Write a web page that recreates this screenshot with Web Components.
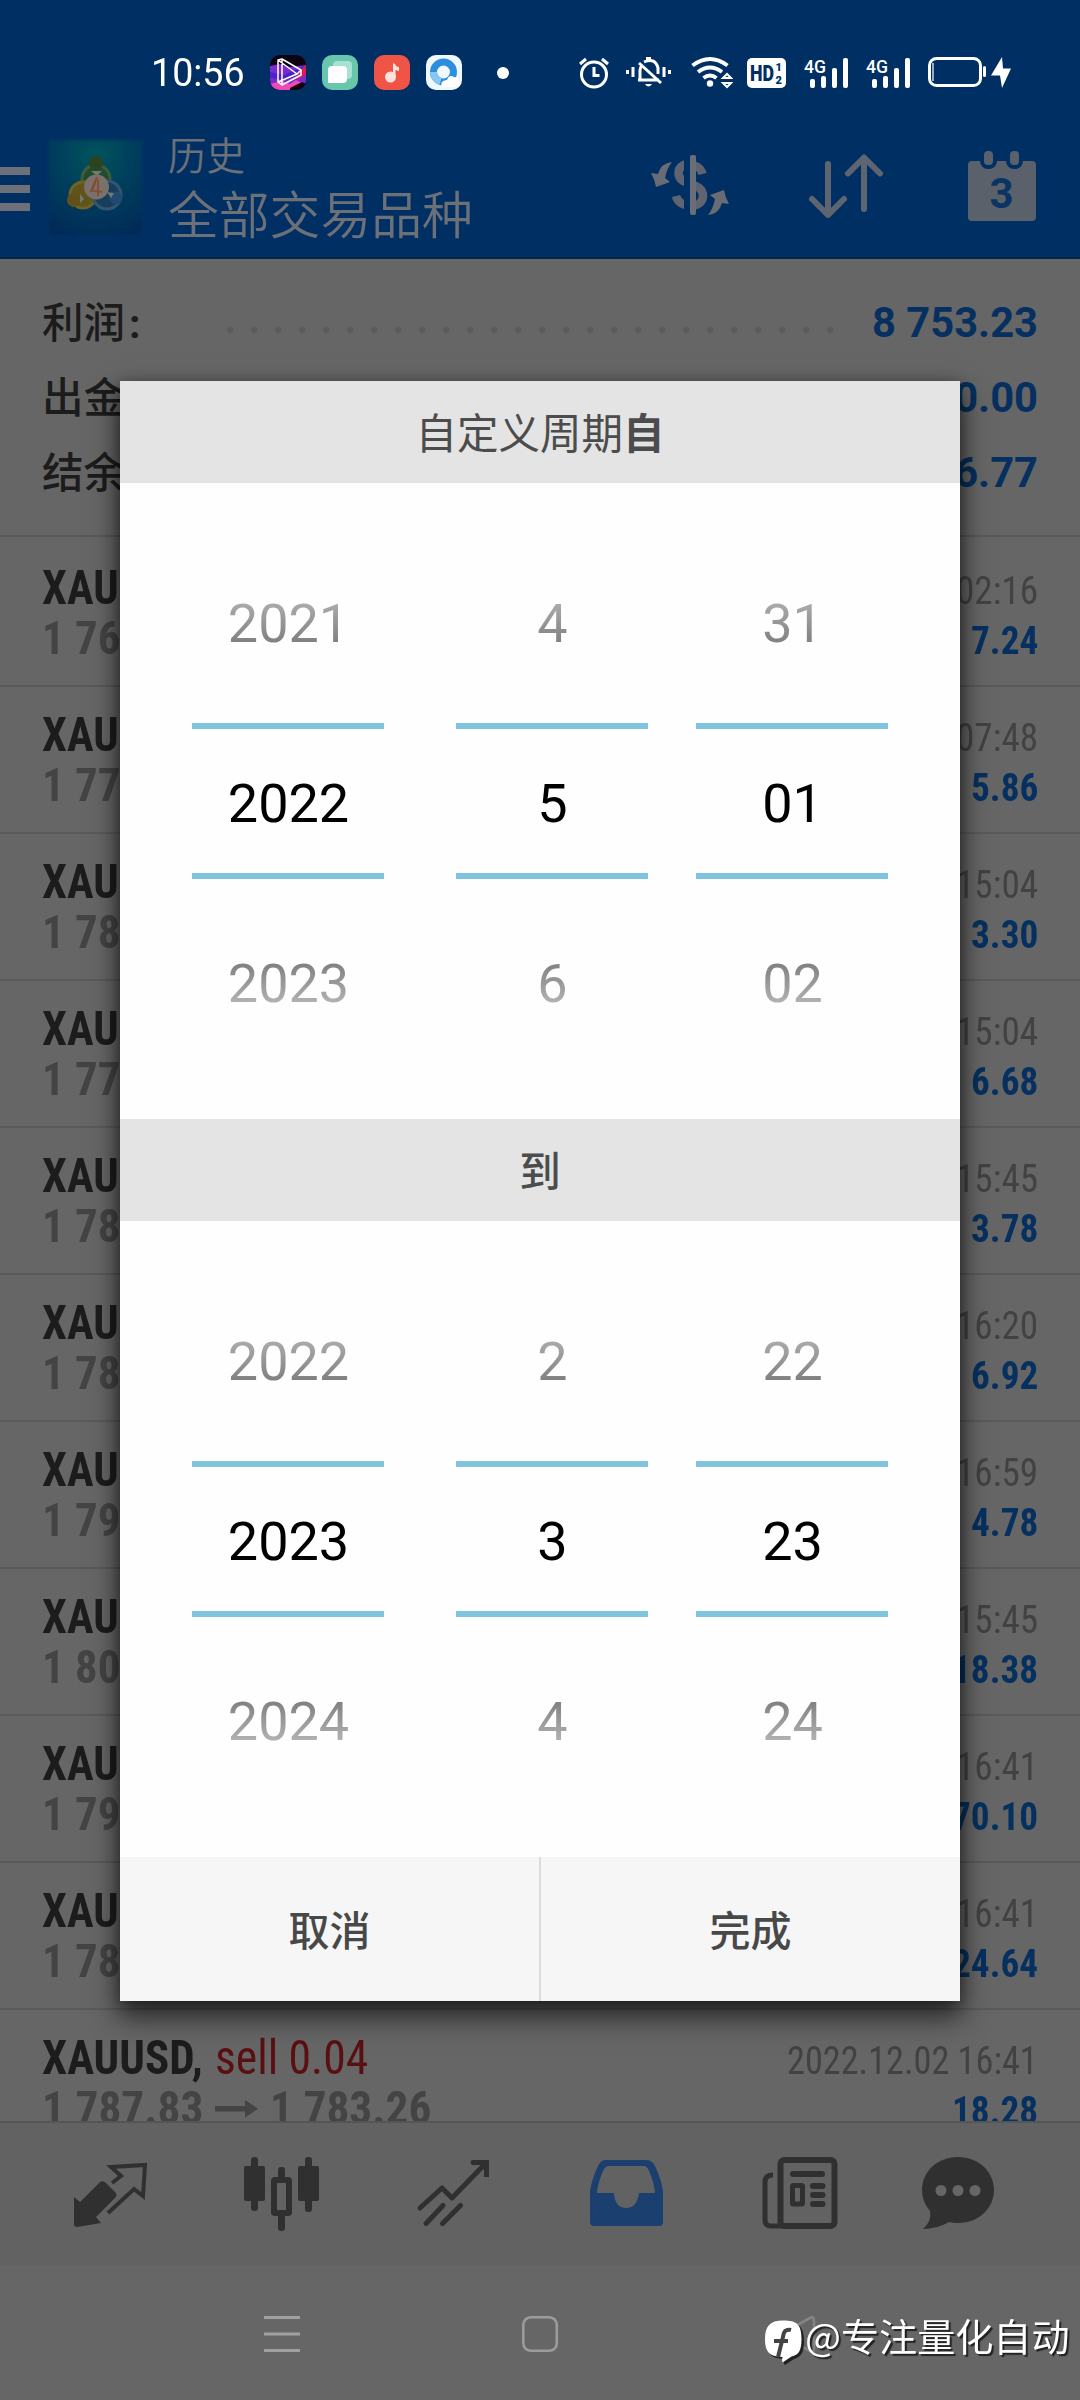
<!DOCTYPE html>
<html lang="zh-CN">
<head>
<meta charset="utf-8">
<title>历史</title>
<style>
html,body{margin:0;padding:0}
body{width:1080px;height:2400px;overflow:hidden;background:#666;font-family:Roboto,"Noto Sans CJK SC",sans-serif}
</style>
</head>
<body>
<history-screen></history-screen>
<script>
const make = (name, html, setup) => customElements.define(name, class extends HTMLElement {
  connectedCallback() {
    if (this.shadowRoot) return;
    const root = this.attachShadow({ mode: 'open' });
    root.innerHTML = typeof html === 'function' ? html(this) : html;
    if (setup) setup(this, root);
  }
});

/* Icons: [viewBox, content] */
const signal = x => `<text x="${x}" y="72" font-size="19" textLength="22" lengthAdjust="spacingAndGlyphs" font-family="Roboto" font-weight="500" fill="#fff">4G</text>
<rect x="${x+6}" y="78" width="5" height="9" rx="2"/><rect x="${x+17}" y="75" width="5" height="12" rx="2"/><rect x="${x+28}" y="67" width="5" height="20" rx="2"/><rect x="${x+39}" y="57" width="5" height="30" rx="2"/>`;
const ICONS = {
  appVideo: ['270 55 36 35', `<defs><clipPath id="r"><rect x="270" y="55" width="36" height="35" rx="10"/></clipPath></defs><g clip-path="url(#r)"><rect x="270" y="55" width="36" height="35" fill="#0b0310"/><path d="M270 66l10-2 10 3 16-2v18l-14 7h-22z" fill="#7a2bd0"/><path d="M270 72l14 3 22-10v7l-20 8-16-2z" fill="#4a22c8"/><path d="M298 72l8-7v10l-9 5z" fill="#d81e5a"/><path d="M270 84l12-3 8 3 6-4 6 3-8 7h-20z" fill="#f04ab4"/><path d="M290 88l12-6 4 2v8h-16z" fill="#14020f"/></g><g fill="none" stroke="#fff" stroke-width="1.5" stroke-linejoin="round"><path d="M278 60l4-1 19 11v5l-19 10-4-3zM282 59v26M278 60l19 14 4-4M297 74l-19 8"/></g>`],
  appFiles: ['322 55 36 35', `<rect x="322" y="55" width="36" height="35" rx="10" fill="#67c6ab"/><rect x="333" y="61" width="19" height="18" rx="4" fill="#a5e2d1"/><path d="M332 66h11q4 0 4 4v9q0 4-4 4h-15v-13q0-4 4-4z" fill="#fff"/>`],
  appMusic: ['374 55 36 35', `<rect x="374" y="55" width="36" height="35" rx="10" fill="#ef5446"/><circle cx="390.500" cy="77" r="5.500" fill="#fde3dc"/><path d="M393 78V63l2 1q1 3 4 3v4l-3.500-1v8z" fill="#fde3dc"/>`],
  appBrowser: ['426 55 36 35', `<rect x="426" y="55" width="36" height="35" rx="10" fill="#eef8fd"/><circle cx="443.500" cy="72" r="10" fill="none" stroke="#2c8fde" stroke-width="7"/><path d="M433.500 72a10 10 0 0 0 7 9.500" fill="none" stroke="#8ac6ee" stroke-width="7"/><path d="M442 87q-3-6 5-7 2-6 7-3 7 1 6 7-2 3-6 3z" fill="#fff"/>`],
  alarm: ['579 56 31 33', `<g fill="none" stroke="#fff" stroke-width="3"><circle cx="594" cy="74.500" r="12.500"/><path d="M580 64l6-5M608 64l-6-5M594 67v8.500h5.500"/></g>`],
  mute: ['625 56 47 33', `<g fill="none" stroke="#fff" stroke-width="3"><path d="M627.500 70v4M633 67v10M664 67v10M669.500 70v4M638 80h21M640 80v-10q0-2 2-5M644 62q11-5 14 6v6M639 63l22 20"/></g><path d="M646 57h5v3h-5zM645 84h7q-3.500 5-7 0z" fill="#fff"/>`],
  wifi: ['690 56 43 33', `<g fill="none" stroke="#fff" stroke-width="4"><path d="M692.500 65.500q17.500-13 35 0M698 72q12-9 24 0M703.500 78q6.500-5 13 0"/></g><circle cx="710" cy="83.500" r="3.200" fill="#fff"/><path d="M723 78l4-4 4 4zM723 83l4 4 4-4z" stroke="#fff" fill="#003063" stroke-width="2"/>`],
  hd: ['747 57 39 30', `<rect x="747" y="57" width="39" height="30" rx="5" fill="#fff"/><text x="750" y="80" font-size="22" font-weight="900" font-family="Roboto" textLength="24" lengthAdjust="spacingAndGlyphs" fill="#003063">HD</text><text x="775.500" y="69.500" font-size="11" font-weight="900" font-family="Roboto" fill="#003063">1</text><text x="775.500" y="83" font-size="11" font-weight="900" font-family="Roboto" fill="#003063">2</text>`],
  signal1: ['804 56 45 32', `<g fill="#fff">${signal(804)}</g>`],
  signal2: ['866 56 45 32', `<g fill="#fff">${signal(866)}</g>`],
  battery: ['927 56 84 33', `<rect x="929.500" y="58.500" width="51" height="27" rx="7" fill="none" stroke="#fff" stroke-width="3"/><path d="M933 63v18" stroke="#fff" stroke-width="1.200"/><rect x="983" y="66" width="3" height="11" rx="1.500" fill="#fff"/><path d="M1002 57l-11 18.500h9l2 12.500 9-19.500h-8z" fill="#fff"/>`],
  logo: ['47 138 97 99', `<defs><radialGradient id="g" cx=".5" cy=".15" r=".9"><stop offset="0" stop-color="#00535a"/><stop offset=".55" stop-color="#023b5c"/><stop offset="1" stop-color="#022b58"/></radialGradient><filter id="b"><feGaussianBlur stdDeviation="1.500"/></filter></defs><rect x="49" y="140" width="93" height="95" fill="url(#g)" filter="url(#b)"/>
<circle cx="96" cy="179" r="14" fill="#234a2c" stroke="#3d5c3c" stroke-width="3"/><circle cx="83" cy="195" r="13" fill="#5f541a" stroke="#6e6224" stroke-width="3"/><circle cx="107" cy="195" r="14" fill="#173e5d" stroke="#335670" stroke-width="3"/><circle cx="96" cy="163" r="7" fill="#2b441f"/><circle cx="74" cy="200" r="7" fill="#62501b"/><circle cx="116" cy="198" r="6.500" fill="#224a70"/><path d="M91 171h11l-5 5zM80 194l4 5-4 4zM107 192l7 1-3 5z" fill="#707a75"/><circle cx="96.500" cy="187" r="12.500" fill="#7b716b"/><path d="M97 177l-6 14h7v5M98 179v12l4 1M93 189l3-9" stroke="#84492f" stroke-width="1.700" fill="none"/>`],
  exchange: ['648 150 84 70', `<defs><clipPath id="s"><path d="M660 150h24v70h-24zM690 150h30v70h-30z"/></clipPath></defs><path clip-path="url(#s)" d="M702.500 174C699 161 678.500 161 678.500 173C678.500 187 703 181 703 196C703 209 679 209 676 196" fill="none" stroke="#5f6470" stroke-width="8.500"/><rect x="690" y="155" width="6" height="60" rx="2" fill="#696e79"/><path d="M672 162Q661 163 658 174L651 173Q655 180 656 187L670 182L665 178Q667 168 672 162Z" fill="#696c74"/><path d="M708 215Q719 214 722 203L729 204Q725 197 724 190L710 195L715 199Q713 209 708 215Z" fill="#696c74"/>`],
  sort: ['806 150 80 72', `<g fill="none" stroke="#5f6471" stroke-width="6" stroke-linecap="round" stroke-linejoin="round"><path d="M828 164v51M812 199l16 16 16-16M864 209v-51M848 173.500l16-16 16 16"/></g>`],
  calendar: ['966 148 72 75', `<rect x="968" y="161" width="68" height="60" rx="4" fill="#5b616b"/><g fill="#5b616b" stroke="#003063" stroke-width="4"><rect x="982" y="149" width="13" height="18" rx="6"/><rect x="1008" y="149" width="13" height="18" rx="6"/></g><text x="1001.500" y="208" font-size="42" font-weight="700" font-family="Roboto" text-anchor="middle" fill="#0a3464">3</text>`],
  quotes: ['72 2155 78 76', `<path d="M74 2197l6 5 20-20q3-2 6 1l9 9q3 3 0 6l-19 19 5 6-24 4q-3 0-3-3z" fill="#303030"/><path d="M112 2183l9-7-10-9 34-2-2 31-9-7-26 24" fill="none" stroke="#303030" stroke-width="4"/>`],
  candles: ['243 2155 78 78', `<g fill="#303030"><rect x="251" y="2157" width="7" height="54" rx="3"/><rect x="244" y="2166" width="21" height="35" rx="2"/><rect x="305" y="2157" width="7" height="55" rx="3"/><rect x="298" y="2166" width="21" height="35" rx="2"/><rect x="278" y="2167" width="7" height="14" rx="3"/><rect x="278" y="2212" width="7" height="19" rx="3"/></g><rect x="274" y="2180" width="15" height="33" rx="1" fill="none" stroke="#303030" stroke-width="6"/>`],
  trade: ['416 2158 76 70', `<g fill="none" stroke="#303030" stroke-width="5" stroke-linecap="round" stroke-linejoin="round"><path d="M420 2208l22-20 10 10 33-34M426 2223.500l17-18M442.500 2223.500l18-18"/></g><path d="M472 2160h17v17h-5l0-7-4-5h-8q-3-3 0-5z" fill="#303030"/>`],
  inbox: ['588 2158 78 70', `<path fill-rule="evenodd" d="M605 2160h42q5 0 8 6 7 15 8 26v30q0 4-4 4h-65q-4 0-4-4v-30q1-11 8-26 3-6 7-6zM609 2166q-4 0-6 5-5 11-6 22h17q1 15 12 15t13-15h16q-1-11-6-22-2-5-5-5z" fill="#1b3f6e"/>`],
  news: ['760 2155 80 76', `<g fill="none" stroke="#303030" stroke-width="6"><path d="M773 2175q-8 0-8 7v38q0 6 6 6h12" stroke-width="5"/><rect x="780.500" y="2160" width="54" height="66" rx="4"/></g><g fill="#303030"><rect x="790" y="2171" width="35" height="6" rx="3"/><rect x="810" y="2183" width="15.500" height="6" rx="3"/><rect x="810" y="2192" width="15.500" height="6" rx="3"/><rect x="810" y="2201" width="15.500" height="6" rx="3"/></g><rect x="792.500" y="2185.500" width="10" height="18.500" rx="1" fill="none" stroke="#303030" stroke-width="5"/>`],
  chat: ['919 2155 78 76', `<path d="M958 2157c21 0 36 15 36 33s-15 33-36 33q-5 0-9-1-12 7-26 7 9-8 7-18-8-9-8-21c0-18 15-33 36-33z" fill="#303030"/><g fill="#666"><circle cx="941" cy="2190.500" r="5.500"/><circle cx="958" cy="2190.500" r="5.500"/><circle cx="975" cy="2190.500" r="5.500"/></g>`],
  menu: ['264 2315 36 38', `<path d="M264 2317.500h36M264 2334h36M264 2350.500h36" stroke="#a0a0a0" stroke-width="3"/>`],
  home: ['521 2315 38 38', `<rect x="523.300" y="2317.300" width="33.500" height="33.500" rx="7.500" fill="none" stroke="#9c9c9c" stroke-width="2.600"/>`],
  back: ['780 2315 38 38', `<path d="M810 2318q4-2 4 3v27q0 5-4 3l-24-14q-4-3 0-6z" fill="none" stroke="#858585" stroke-width="2.600"/>`],
  brand: ['763 2318 42 48', `<path d="M783.500 2321.500c14 0 19 4 19 18.500 0 12-3 16-10 18l-9 6q-2-2-1-6c-13-.5-17-5-17-18s5-18.500 18-18.500z" fill="#222" transform="translate(1.500 1)"/><path d="M783 2320.500c14 0 18.500 4 18.500 18.500 0 12-3 16-10 17.500l-9 6q-1-2 0-5.500c-13-.5-17.500-5-17.500-18s5-18.500 18-18.500z" fill="#fff"/><path d="M791 2330q-7-2-8 7l-5 20M774 2341h14" stroke="#444" stroke-width="4" fill="none"/>`],
  arrow: ['215 2098 43 20', `<path d="M215 2105h30v-6l13 8.700-13 8.800v-6h-30z" fill="#444"/>`],
};
const icon = name => `<ui-icon name="${name}"></ui-icon>`;

make('ui-icon', el => {
  const [box, body] = ICONS[el.getAttribute('name')];
  const [, , w, h] = box.split(' ');
  return `<style>:host{display:block;flex:none;width:${w}px;height:${h}px}svg{display:block}</style><svg width="${w}" height="${h}" viewBox="${box}">${body}</svg>`;
});

make('status-bar', `<style>
:host{display:flex;align-items:center;height:110px;color:#fff;box-sizing:border-box;padding:35px 69px 0 151px}
.time{font-size:38px;line-height:40px}
.apps{display:flex;gap:16px;margin-left:25px}
.dot{width:12px;height:12px;border-radius:50%;background:#fff;margin-left:35px}
.sys{display:flex;align-items:center;margin-left:auto}
.sys ui-icon+ui-icon{margin-left:15px}
</style>
<fit-text class="time" w="94">10:56</fit-text>
<div class="apps">${icon('appVideo')}${icon('appFiles')}${icon('appMusic')}${icon('appBrowser')}</div><span class="dot"></span>
<div class="sys">${icon('alarm')}${icon('mute')}<ui-icon name="wifi" style="margin-left:18px"></ui-icon><ui-icon name="hd" style="margin-left:14px"></ui-icon><ui-icon name="signal1" style="margin-left:18px"></ui-icon><ui-icon name="signal2" style="margin-left:17px"></ui-icon><ui-icon name="battery" style="margin-left:16px"></ui-icon></div>`);

make('app-header', `<style>
:host{display:flex;height:149px;box-sizing:border-box;padding-right:42px;color:#6c7078;border-bottom:2px solid #00284f}
.burger{width:30px;display:flex;flex-direction:column;gap:10px;padding-top:57px}
.burger i{height:8px;background:#6d7078}
.logo{margin:28px 0 0 17px}
.titles{margin-left:24px;padding-top:24px;font-family:"Noto Sans CJK SC",sans-serif;font-weight:350}
.a{font-size:38.500px;line-height:38px}
.b{font-size:50.800px;line-height:50px;margin-top:15px}
.tools{margin-left:auto;display:flex;align-items:flex-start}
</style>
<div class="burger"><i></i><i></i><i></i></div><ui-icon class="logo" name="logo"></ui-icon>
<div class="titles"><div class="a">历史</div><div class="b">全部交易品种</div></div>
<div class="tools"><ui-icon name="exchange" style="margin:40px 74px 0 0"></ui-icon><ui-icon name="sort" style="margin:40px 80px 0 0"></ui-icon><ui-icon name="calendar" style="margin-top:38px"></ui-icon></div>`);

make('summary-row', el => `<style>
:host{display:flex;align-items:center;height:75px;padding:0 42px;color:#1c1c1c}
.l{font:500 41.500px/71px "Noto Sans CJK SC",sans-serif;white-space:nowrap;height:75px}
.l b{font:700 41px Roboto;margin-left:4px}
.dots{width:624px;height:8px;margin-left:77px;margin-top:14px;background:radial-gradient(circle,#5b5b5b 2.500px,transparent 3.800px) 0 0/24px 8px}
.v{margin-left:auto;font:700 41.700px/75px Roboto,sans-serif;color:#06305f;white-space:nowrap}
</style><span class="l">${el.getAttribute('label')}</span>${el.hasAttribute('dots') ? '<div class="dots"></div>' : ''}<span class="v"><slot></slot></span>`);

make('deal-row', el => {
  const a = n => el.getAttribute(n);
  const full = el.hasAttribute('full');
  return `<style>
:host{display:block;flex:none;height:147px;box-sizing:border-box;border-bottom:2px solid #5a5a5a;padding:22px 42px 0;font-family:"Roboto Condensed",Roboto,sans-serif}
.l{display:flex;align-items:baseline;height:51px}
.sym{font-size:48px;line-height:51px;font-weight:700;color:#1c1c1c}
.sell{font-size:48px;line-height:51px;color:#5a1013;margin-left:12px}
.px{font-size:46px;line-height:51px;font-weight:700;color:#444}
ui-icon{align-self:center;margin:0 12px 0 12px}
.t{font-size:39px;line-height:51px;color:#424242;margin-left:auto}
.v{font-size:39px;line-height:51px;font-weight:700;color:#06305f;margin-left:auto}
</style>
<div class="l"><fit-text class="sym" w="${full ? 161 : 77}">${full ? 'XAUUSD,' : 'XAU'}</fit-text>${full ? '<fit-text class="sell" w="153">sell 0.04</fit-text>' : ''}<fit-text class="t" w="${full ? 251 : 82}">${a('time')}</fit-text></div>
<div class="l"><fit-text class="px" w="${full ? 161 : 78}">${a('from')}</fit-text>${full ? icon('arrow') + '<fit-text class="px" w="161">1 783.26</fit-text>' : ''}<fit-text class="v" w="${a('val').length > 4 ? 86 : 67}">${a('val')}</fit-text></div>`;
});

make('tab-bar', `<style>
:host{display:flex;align-items:flex-start;height:144px;box-sizing:border-box;border-top:2px solid #555;background:#626262;padding-left:72px}
ui-icon{margin-top:32px}
[name=candles]{margin-left:93px}
[name=trade]{margin:35px 0 0 95px}
[name=inbox]{margin:35px 0 0 96px}
[name=news]{margin-left:94px}
[name=chat]{margin-left:79px}
</style>
${icon('quotes')}${icon('candles')}${icon('trade')}${icon('inbox')}${icon('news')}${icon('chat')}`);

make('nav-bar', `<style>
:host{display:flex;height:135px;background:#666;box-sizing:border-box;padding:50px 0 0 264px}
ui-icon{margin-right:221px}
</style>${icon('menu')}${icon('home')}${icon('back')}`);

make('wheel-column', el => {
  const [a, b, c] = el.getAttribute('values').split(',');
  return `<style>
:host{display:flex;flex-direction:column;width:192px;text-align:center;font:54px/144px Roboto,sans-serif;color:#000}
div{box-sizing:border-box;padding-left:1px}
.side{-webkit-background-clip:text;background-clip:text;color:transparent;background-origin:border-box}
.top{height:162px;background-image:linear-gradient(#ababab 42px,#808080 82px);line-height:125px}
.bot{height:190px;background-image:linear-gradient(#808080 84px,#b2b2b2 124px);padding-top:33px}
.mid{height:156px;border-top:6px solid #7fc3dc;border-bottom:6px solid #7fc3dc;line-height:149px}
</style><div class="side top">${a}</div><div class="mid">${b}</div><div class="side bot">${c}</div>`;
});

make('date-wheels', `<style>
:host{display:flex;height:636px;box-sizing:border-box;padding:78px 72px 0;background:#fefefe}
::slotted(:nth-child(2)){margin-left:72px}
::slotted(:nth-child(3)){margin-left:48px}
</style><slot></slot>`);

make('section-title', `<style>
:host{display:block;height:102px;background:#e4e4e4;color:#4c4c4c;text-align:center;font:400 41.500px/100px "Noto Sans CJK SC",sans-serif}
::slotted(b){font-weight:700}
</style><slot></slot>`);

make('dialog-actions', `<style>
:host{display:flex;height:144px;background:#f6f6f6;color:#484848;font:500 41px/142px "Noto Sans CJK SC",sans-serif;text-align:center}
div{flex:1}div+div{border-left:2px solid #dcdcdc}
</style><div><slot name="cancel"></slot></div><div><slot name="done"></slot></div>`);

make('period-dialog', `<style>
:host{display:block;width:840px;box-shadow:0 14px 26px 2px rgba(0,0,0,.62),0 2px 12px rgba(0,0,0,.3);background:#fff}
</style>
<section-title>自定义周期<b>自</b></section-title>
<date-wheels><wheel-column values="2021,2022,2023"></wheel-column><wheel-column values="4,5,6"></wheel-column><wheel-column values="31,01,02"></wheel-column></date-wheels>
<section-title><span style="font-weight:500">到</span></section-title>
<date-wheels><wheel-column values="2022,2023,2024"></wheel-column><wheel-column values="2,3,4"></wheel-column><wheel-column values="22,23,24"></wheel-column></date-wheels>
<dialog-actions><span slot="cancel">取消</span><span slot="done">完成</span></dialog-actions>`);

make('author-mark', `<style>
:host{display:flex;align-items:flex-start;color:#fff;font:400 37.500px/34px "Noto Sans CJK SC",sans-serif;white-space:nowrap;text-shadow:2px 2px 1px #222}
</style>${icon('brand')}<fit-text w="264">@专注量化自动</fit-text>`);

const deals = [['1 76','02:16','7.24'],['1 77','07:48','5.86'],['1 78','15:04','3.30'],['1 77','15:04','6.68'],['1 78','15:45','3.78'],['1 78','16:20','6.92'],['1 79','16:59','4.78'],['1 80','15:45','18.38'],['1 79','16:41','70.10'],['1 78','16:41','24.64']];
make('history-screen', `<style>
:host{display:flex;flex-direction:column;width:1080px;height:2400px;position:relative;overflow:hidden;background:#666}
.top{background:#003063;height:259px}
.sum{height:278px;box-sizing:border-box;border-bottom:2px solid #595959;padding-top:26px}
.list{height:1584px;box-sizing:border-box;padding-top:3px;overflow:hidden;display:flex;flex-direction:column}
period-dialog{position:absolute;left:120px;top:381px}
author-mark{position:absolute;left:763px;top:2318px}
</style>
<div class="top"><status-bar></status-bar><app-header></app-header></div>
<div class="sum"><summary-row label="利润<b>:</b>" dots>8 753.23</summary-row><summary-row label="出金">0.00</summary-row><summary-row label="结余">6.77</summary-row></div>
<div class="list">${deals.map(d => `<deal-row from="${d[0]}" time="${d[1]}" val="${d[2]}"></deal-row>`).join('')}<deal-row full from="1 787.83" time="2022.12.02 16:41" val="18.28"></deal-row></div>
<tab-bar></tab-bar><nav-bar></nav-bar>
<period-dialog></period-dialog><author-mark></author-mark>`);

/* Text squeezed or stretched horizontally to an exact advance width. */
make('fit-text', el => `<style>:host{display:block;flex:none;width:${el.getAttribute('w')}px;white-space:nowrap}span{display:inline-block;transform-origin:0 50%}</style><span><slot></slot></span>`,
  (el, root) => {
    const s = root.querySelector('span');
    s.style.transform = `scaleX(${el.getAttribute('w') / s.offsetWidth})`;
  });
</script>
</body>
</html>
